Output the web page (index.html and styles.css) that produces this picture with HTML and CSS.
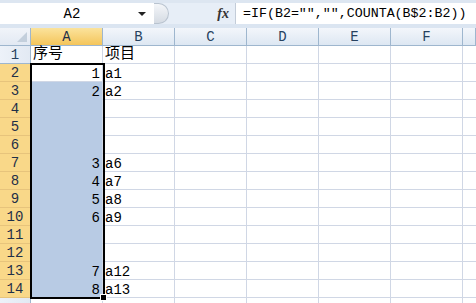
FILE: index.html
```html
<!DOCTYPE html>
<html lang="zh-CN">
<head>
    <meta charset="UTF-8">
    <title>Excel</title>
    <link rel="stylesheet" href="styles.css">
</head>
<body>
    <div class="toolbar">
        <div class="namebox">
            <span class="name">A2</span>
            <span class="arrow"></span>
        </div>
        <div class="knob"></div>
        <div class="fx">fx</div>
        <div class="formula">=IF(B2="","",COUNTA(B$2:B2))</div>
    </div>

    <div class="sheet">
        <div class="corner"><span class="tri"></span></div>
        <div class="colhead sel">A</div>
        <div class="colhead">B</div>
        <div class="colhead">C</div>
        <div class="colhead">D</div>
        <div class="colhead">E</div>
        <div class="colhead">F</div>
        <div class="colhead last"></div>

        <div class="rowhead">1</div>
        <div class="cell cjk">序号</div><div class="cell cjk">项目</div>
        <div class="cell"></div><div class="cell"></div><div class="cell"></div><div class="cell"></div><div class="cell last"></div>

        <div class="rowhead sel">2</div>
        <div class="cell num active">1<div class="selection"><span class="handle"></span></div></div><div class="cell">a1</div>
        <div class="cell"></div><div class="cell"></div><div class="cell"></div><div class="cell"></div><div class="cell last"></div>

        <div class="rowhead sel">3</div>
        <div class="cell num hl">2</div><div class="cell">a2</div>
        <div class="cell"></div><div class="cell"></div><div class="cell"></div><div class="cell"></div><div class="cell last"></div>

        <div class="rowhead sel">4</div>
        <div class="cell num hl"></div><div class="cell"></div>
        <div class="cell"></div><div class="cell"></div><div class="cell"></div><div class="cell"></div><div class="cell last"></div>

        <div class="rowhead sel">5</div>
        <div class="cell num hl"></div><div class="cell"></div>
        <div class="cell"></div><div class="cell"></div><div class="cell"></div><div class="cell"></div><div class="cell last"></div>

        <div class="rowhead sel">6</div>
        <div class="cell num hl"></div><div class="cell"></div>
        <div class="cell"></div><div class="cell"></div><div class="cell"></div><div class="cell"></div><div class="cell last"></div>

        <div class="rowhead sel">7</div>
        <div class="cell num hl">3</div><div class="cell">a6</div>
        <div class="cell"></div><div class="cell"></div><div class="cell"></div><div class="cell"></div><div class="cell last"></div>

        <div class="rowhead sel">8</div>
        <div class="cell num hl">4</div><div class="cell">a7</div>
        <div class="cell"></div><div class="cell"></div><div class="cell"></div><div class="cell"></div><div class="cell last"></div>

        <div class="rowhead sel">9</div>
        <div class="cell num hl">5</div><div class="cell">a8</div>
        <div class="cell"></div><div class="cell"></div><div class="cell"></div><div class="cell"></div><div class="cell last"></div>

        <div class="rowhead sel">10</div>
        <div class="cell num hl">6</div><div class="cell">a9</div>
        <div class="cell"></div><div class="cell"></div><div class="cell"></div><div class="cell"></div><div class="cell last"></div>

        <div class="rowhead sel">11</div>
        <div class="cell num hl"></div><div class="cell"></div>
        <div class="cell"></div><div class="cell"></div><div class="cell"></div><div class="cell"></div><div class="cell last"></div>

        <div class="rowhead sel">12</div>
        <div class="cell num hl"></div><div class="cell"></div>
        <div class="cell"></div><div class="cell"></div><div class="cell"></div><div class="cell"></div><div class="cell last"></div>

        <div class="rowhead sel">13</div>
        <div class="cell num hl">7</div><div class="cell">a12</div>
        <div class="cell"></div><div class="cell"></div><div class="cell"></div><div class="cell"></div><div class="cell last"></div>

        <div class="rowhead sel">14</div>
        <div class="cell num hl">8</div><div class="cell">a13</div>
        <div class="cell"></div><div class="cell"></div><div class="cell"></div><div class="cell"></div><div class="cell last"></div>

        <div class="rowhead"></div>
        <div class="cell"></div><div class="cell"></div>
        <div class="cell"></div><div class="cell"></div><div class="cell"></div><div class="cell"></div><div class="cell last"></div>
    </div>
</body>
</html>
```

FILE: styles.css
```css
body {
    margin: 0;
    width: 476px;
    height: 303px;
    overflow: hidden;
    background: #fff;
    font-family: "Liberation Mono", "Noto Sans CJK SC", monospace;
}
.toolbar {
    height: 21px;
    display: flex;
    align-items: stretch;
    background: #e7eef7;
    border-top: 3px solid #dde6f1;
    border-bottom: 4px solid #dbe5f1;
}
.namebox {
    width: 156px;
    background: #fff;
    display: flex;
    align-items: center;
}
.name {
    flex: 1;
    text-align: center;
    font-size: 14px;
    padding-left: 6px;
}
.arrow {
    width: 0;
    height: 0;
    border-left: 4px solid transparent;
    border-right: 4px solid transparent;
    border-top: 4px solid #222;
    margin-right: 10px;
}
.knob {
    width: 14px;
    margin-left: -2px;
    border-radius: 0 12px 12px 0;
    background: linear-gradient(#f4f6f9, #d5dbe3);
    border: 1px solid #b9c3cf;
    border-left: none;
}
.fx {
    width: 60px;
    text-align: right;
    padding-right: 6px;
    font-family: "Liberation Serif", serif;
    font-style: italic;
    font-weight: bold;
    font-size: 14px;
    line-height: 21px;
    color: #333;
    border-right: 1px solid #c3ccd8;
}
.formula {
    flex: 1;
    background: #fff;
    font-size: 13.3px;
    line-height: 21px;
    padding-left: 7px;
    white-space: nowrap;
    overflow: hidden;
}
.sheet {
    display: grid;
    grid-template-columns: 31px repeat(6, 72px) 13px;
    grid-template-rows: repeat(16, 18px);
}
.corner {
    background: linear-gradient(#f1f4f9, #e2e9f3);
    border-right: 1px solid #9eb6ce;
    border-bottom: 1px solid #9eb6ce;
    position: relative;
}
.tri {
    position: absolute;
    right: 3px;
    bottom: 3px;
    width: 0;
    height: 0;
    border-left: 10px solid transparent;
    border-bottom: 10px solid #c3cfdc;
}
.colhead {
    background: linear-gradient(#f3f6fb, #dde7f2);
    border-right: 1px solid #9eb6ce;
    border-bottom: 1px solid #9eb6ce;
    text-align: center;
    font-size: 14px;
    line-height: 19px;
    color: #27415f;
}
.colhead.sel {
    background: linear-gradient(#fbe39c, #f4c55b);
    color: #1f2f48;
}
.rowhead {
    background: linear-gradient(90deg, #edf2f9, #e2e9f3);
    border-right: 1px solid #9eb6ce;
    border-bottom: 1px solid #9eb6ce;
    text-align: center;
    font-size: 14px;
    line-height: 19px;
    color: #27415f;
}
.rowhead.sel {
    background: #f9d889;
    border-bottom-color: #e7c47c;
    color: #1f2f48;
}
.cell {
    border-right: 1px solid #d0d7e5;
    border-bottom: 1px solid #d0d7e5;
    font-size: 14px;
    line-height: 20px;
    padding: 0 2px;
    white-space: nowrap;
    color: #000;
}
.cell.cjk {
    font-size: 15px;
    line-height: 18px;
}
.cell.num {
    text-align: right;
}
.cell.hl {
    background: #b8cbe4;
    border-bottom-color: #b8cbe4;
}
.cell.active {
    background: #fff;
    position: relative;
}
.cell.last {
    border-right: none;
}
.selection {
    position: absolute;
    left: -1px;
    top: -1px;
    width: 71px;
    height: 232px;
    border: 2px solid #000;
    pointer-events: none;
}
.handle {
    position: absolute;
    right: -4px;
    bottom: -4px;
    width: 5px;
    height: 5px;
    background: #000;
    border: 1px solid #fff;
}
```
